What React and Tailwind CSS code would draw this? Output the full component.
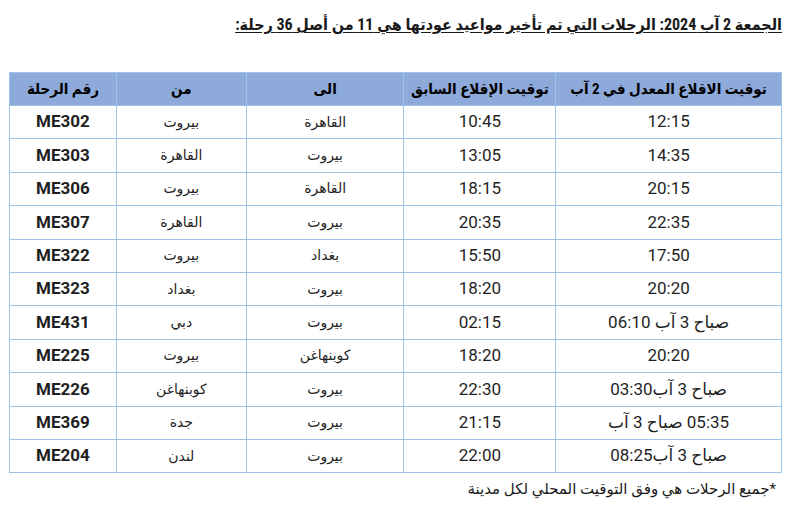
import React from 'react';

const rows = [
  { no: "ME302", from: "بيروت", to: "القاهرة", old: "10:45", now: ["12:15"] },
  { no: "ME303", from: "القاهرة", to: "بيروت", old: "13:05", now: ["14:35"] },
  { no: "ME306", from: "بيروت", to: "القاهرة", old: "18:15", now: ["20:15"] },
  { no: "ME307", from: "القاهرة", to: "بيروت", old: "20:35", now: ["22:35"] },
  { no: "ME322", from: "بيروت", to: "بغداد", old: "15:50", now: ["17:50"] },
  { no: "ME323", from: "بغداد", to: "بيروت", old: "18:20", now: ["20:20"] },
  { no: "ME431", from: "دبي", to: "بيروت", old: "02:15", now: ["06:10", " ", "آب", " ", "3", " ", "صباح"] },
  { no: "ME225", from: "بيروت", to: "كوبنهاغن", old: "18:20", now: ["20:20"] },
  { no: "ME226", from: "كوبنهاغن", to: "بيروت", old: "22:30", now: ["03:30", "آب", " ", "3", " ", "صباح"] },
  { no: "ME369", from: "جدة", to: "بيروت", old: "21:15", now: ["آب", " ", "3", " ", "صباح", " ", "05:35"] },
  { no: "ME204", from: "لندن", to: "بيروت", old: "22:00", now: ["08:25", "آب", " ", "3", " ", "صباح"] },
];

// parts are given in visual order, left to right
const Visual = ({ parts }) => (
  <span dir="ltr" className="whitespace-pre">
    {parts.map((p, i) => (p === " " ? " " : <bdi key={i}>{p}</bdi>))}
  </span>
);

const cell = "border border-[#9dc3e6] text-center align-middle h-[33.4px] p-0";

export default function App() {
  return (
    <div
      className="w-[792px] h-[512px] bg-white text-[#1f1f1f] overflow-hidden"
      style={{ fontFamily: '"Roboto", "DejaVu Sans", sans-serif' }}
    >
      <div dir="rtl" className="pt-[13px] pr-[10px] text-[16px] font-bold font-stretch-condensed underline underline-offset-2 leading-[24px] text-[#1a1a1a]">
        الجمعة 2 آب 2024: الرحلات التي تم تأخير مواعيد عودتها هي 11 من أصل 36 رحلة:
      </div>

      <table dir="rtl" className="ml-[9px] mt-[35px] w-[773px] border-collapse">
        <thead>
          <tr className="bg-[#8eaadb] text-[15px] font-bold font-stretch-condensed text-black">
            <th className={`${cell} w-[226px] h-[33px]`}>توقيت الاقلاع المعدل في 2 آب</th>
            <th className={`${cell} w-[152px] h-[33px]`}>توقيت الإقلاع السابق</th>
            <th className={`${cell} w-[158px] h-[33px]`}>الى</th>
            <th className={`${cell} w-[130px] h-[33px]`}>من</th>
            <th className={`${cell} w-[107px] h-[33px]`}>رقم الرحلة</th>
          </tr>
        </thead>
        <tbody>
          {rows.map((r) => (
            <tr key={r.no}>
              <td className={`${cell} text-[17px]`}><Visual parts={r.now} /></td>
              <td className={`${cell} text-[17px]`}>{r.old}</td>
              <td className={`${cell} text-[14px]`}>{r.to}</td>
              <td className={`${cell} text-[14px]`}>{r.from}</td>
              <td className={`${cell} text-[17px] font-bold`}>{r.no}</td>
            </tr>
          ))}
        </tbody>
      </table>

      <div dir="rtl" className="pr-[16px] pt-[5px] text-[15px] text-[#1a1a1a]">
        *جميع الرحلات هي وفق التوقيت المحلي لكل مدينة
      </div>
    </div>
  );
}
